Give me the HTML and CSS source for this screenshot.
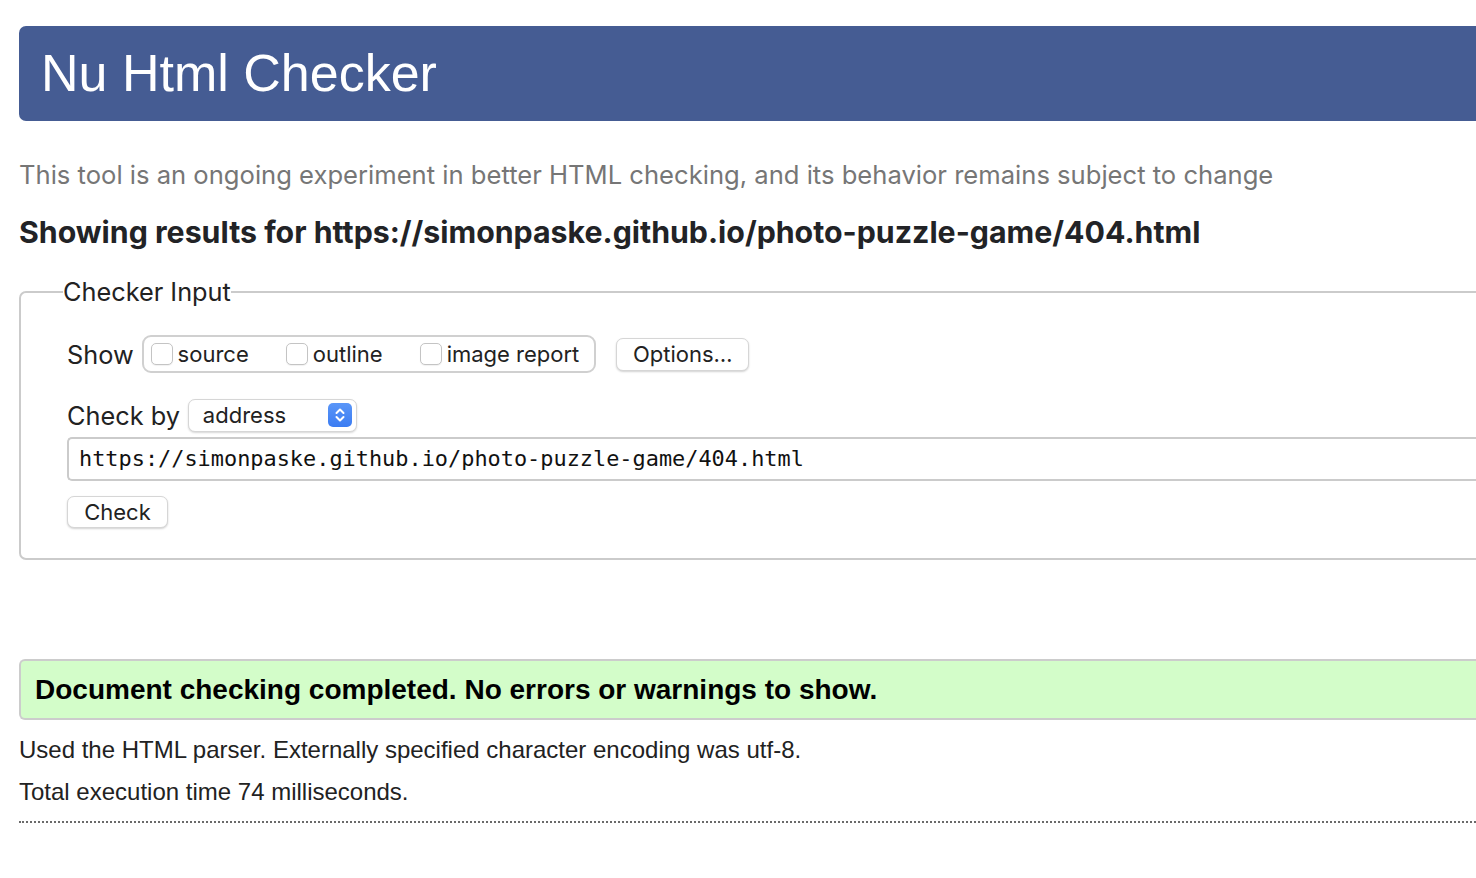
FILE: index.html
```html
<!DOCTYPE html>
<html lang="en">
<head>
<meta charset="utf-8">
<title>Nu Html Checker</title>
<link rel="stylesheet" href="styles.css">
</head>
<body>
<div class="page">
  <h1 class="banner">Nu Html Checker</h1>
  <p class="intro">This tool is an ongoing experiment in better HTML checking, and its behavior remains subject to change</p>
  <h2 class="results-for">Showing results for https://simonpaske.github.io/photo-puzzle-game/404.html</h2>

  <fieldset class="checker">
    <legend class="checker-legend">Checker Input</legend>
    <div class="row show-row">
      <span class="row-label">Show</span>
      <div class="check-group">
        <label class="check"><span class="box"></span>source</label>
        <label class="check"><span class="box"></span>outline</label>
        <label class="check"><span class="box"></span>image report</label>
      </div>
      <button class="btn options-btn" type="button">Options…</button>
    </div>
    <div class="row by-row">
      <span class="row-label">Check by</span>
      <div class="select">
        <span class="select-text">address</span>
        <span class="stepper">
          <svg width="24" height="24" viewBox="0 0 24 24" aria-hidden="true">
            <path d="M8.5 10 L12 6.5 L15.5 10" fill="none" stroke="#fff" stroke-width="2" stroke-linecap="round" stroke-linejoin="round"/>
            <path d="M8.5 14 L12 17.5 L15.5 14" fill="none" stroke="#fff" stroke-width="2" stroke-linecap="round" stroke-linejoin="round"/>
          </svg>
        </span>
      </div>
    </div>
    <div class="url-input">https://simonpaske.github.io/photo-puzzle-game/404.html</div>
    <button class="btn check-btn" type="button">Check</button>
  </fieldset>

  <div class="success">Document checking completed. No errors or warnings to show.</div>
  <p class="note first">Used the HTML parser. Externally specified character encoding was utf-8.</p>
  <p class="note">Total execution time 74 milliseconds.</p>
  <hr class="dotted">
</div>
</body>
</html>
```

FILE: styles.css
```css
html, body {
  margin: 0;
  padding: 0;
  background: #fff;
  overflow: hidden;
}

.page {
  width: 1560px;
  padding: 26px 0 0 19px;
  font-family: "Liberation Sans", Arial, sans-serif;
  color: #222;
}

.banner {
  margin: 0;
  height: 95px;
  line-height: 95px;
  padding-left: 22px;
  background: #455c93;
  color: #fff;
  font-family: "Liberation Sans", Arial, sans-serif;
  font-weight: normal;
  font-size: 52px;
  border-radius: 7px 0 0 7px;
}

.intro {
  margin: 0;
  padding-top: 38px;
  height: 32px;
  line-height: 32px;
  font-family: Inter, "Noto Sans", sans-serif;
  font-size: 25.6px;
  color: #767676;
}

.results-for {
  margin: 0;
  padding-top: 24px;
  height: 34px;
  line-height: 34px;
  font-family: Inter, "Noto Sans", sans-serif;
  font-weight: bold;
  font-size: 30.3px;
  color: #222326;
}

.checker {
  margin: 28px 0 0 0;
  padding: 27px 0 30px 46px;
  border: 2px solid #cbcbcb;
  border-radius: 7px 0 0 7px;
  font-family: Inter, "Noto Sans", sans-serif;
}

.checker-legend {
  margin-left: -4px;
  padding: 0;
  font-size: 25.3px;
  line-height: 30px;
  color: #222;
}

.row {
  display: flex;
  align-items: center;
}

.row-label {
  font-size: 25.3px;
  color: #222;
}

.show-row {
  height: 40px;
}

.check-group {
  display: flex;
  align-items: center;
  gap: 37px;
  margin-left: 8px;
  box-sizing: border-box;
  height: 38px;
  padding: 0 15px 0 7px;
  border: 2px solid #d0d0d0;
  border-radius: 9px;
}

.check {
  display: flex;
  align-items: center;
  gap: 5px;
  font-size: 22px;
  color: #222;
}

.box {
  width: 20px;
  height: 20px;
  border: 1px solid #c4c4c4;
  border-radius: 5px;
  background: #fff;
  box-shadow: 0 1px 1px rgba(0,0,0,0.06);
}

.btn {
  font-family: Inter, "Noto Sans", sans-serif;
  font-size: 22px;
  color: #222;
  background: #fff;
  border: 1px solid #d6d6d6;
  border-radius: 7px;
  box-shadow: 0 1px 2px rgba(0,0,0,0.18);
  padding: 0 14px;
  height: 33px;
}

.options-btn {
  margin-left: 20px;
  width: 133px;
}

.by-row {
  margin-top: 24px;
  height: 34px;
}

.select {
  display: flex;
  align-items: center;
  justify-content: space-between;
  margin-left: 8px;
  width: 169px;
  height: 33px;
  box-sizing: border-box;
  padding: 0 4px 0 14px;
  border: 1px solid #d6d6d6;
  border-radius: 7px;
  box-shadow: 0 1px 2px rgba(0,0,0,0.16);
  background: #fff;
}

.select-text {
  font-size: 22px;
  color: #222;
}

.stepper {
  display: flex;
  width: 24px;
  height: 24px;
  border-radius: 5px;
  background: linear-gradient(#5a96f8, #3b7cf2);
}

.url-input {
  margin-top: 5px;
  box-sizing: border-box;
  height: 44px;
  line-height: 40px;
  padding-left: 10px;
  border: 2px solid #cbcbcb;
  border-right: none;
  border-radius: 5px 0 0 5px;
  font-family: "DejaVu Sans Mono", "Liberation Mono", monospace;
  font-size: 21.9px;
  color: #111;
}

.check-btn {
  display: block;
  margin-top: 15px;
  width: 101px;
  height: 32px;
}

.success {
  margin-top: 99px;
  box-sizing: border-box;
  height: 61px;
  line-height: 57px;
  padding-left: 14px;
  border: 2px solid #cccccc;
  border-right: none;
  border-radius: 6px 0 0 6px;
  background: #d3fdc9;
  font-family: "Liberation Sans", Arial, sans-serif;
  font-weight: bold;
  font-size: 28px;
  color: #000;
}

.note {
  margin: 0;
  height: 42px;
  line-height: 42px;
  font-family: "Liberation Sans", Arial, sans-serif;
  font-size: 24px;
  color: #222;
}

.note.first {
  padding-top: 9px;
}

.dotted {
  margin: 8px 0 0 0;
  border: none;
  border-top: 2px dotted #6a6a6a;
  height: 0;
}
```
